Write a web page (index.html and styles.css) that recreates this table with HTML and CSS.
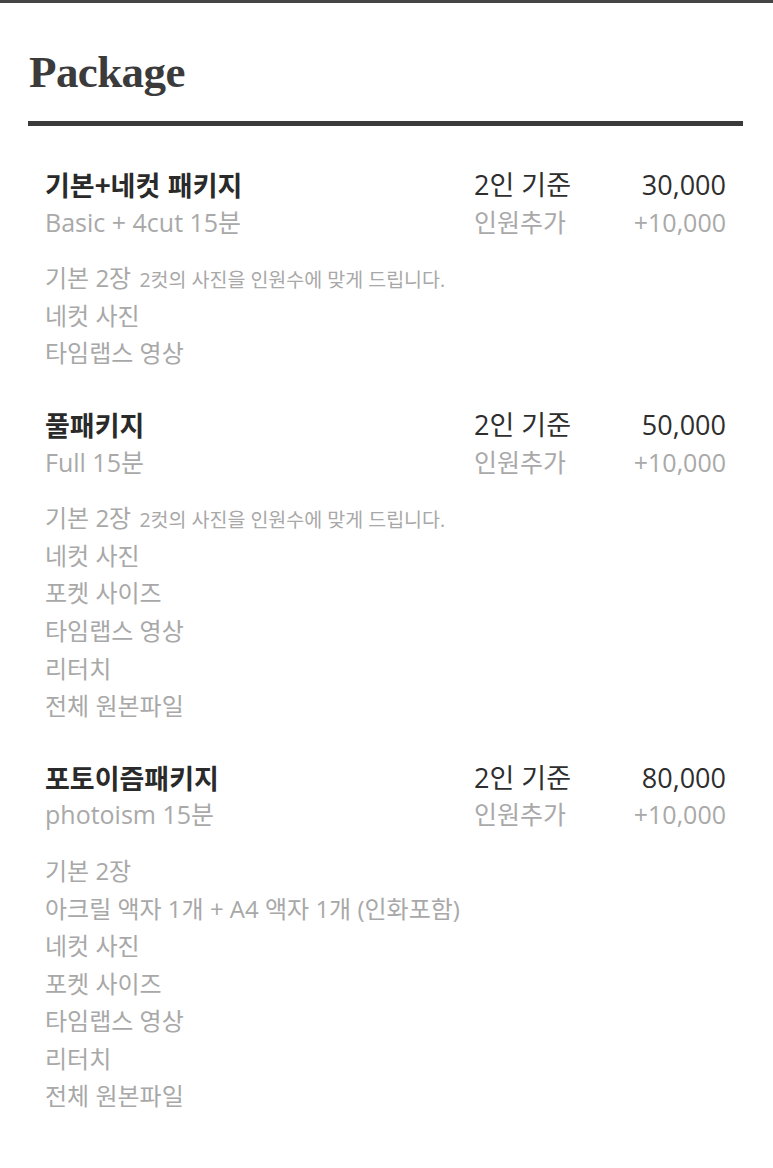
FILE: index.html
```html
<!DOCTYPE html>
<html lang="ko">
<head>
<meta charset="utf-8">
<link rel="stylesheet" href="styles.css">
</head>
<body>
<div class="topbar"></div>
<main class="page">
  <h1 class="heading">Package</h1>
  <div class="rule"></div>

  <section class="pkg">
    <div class="row">
      <div class="name">기본+네컷 패키지</div>
      <div class="base">2인 기준</div>
      <div class="price">30,000</div>
    </div>
    <div class="row sub">
      <div class="name">Basic + 4cut 15분</div>
      <div class="base">인원추가</div>
      <div class="price">+10,000</div>
    </div>
    <ul class="details">
      <li>기본 2장 <span class="note">2컷의 사진을 인원수에 맞게 드립니다.</span></li>
      <li>네컷 사진</li>
      <li>타임랩스 영상</li>
    </ul>
  </section>

  <section class="pkg">
    <div class="row">
      <div class="name">풀패키지</div>
      <div class="base">2인 기준</div>
      <div class="price">50,000</div>
    </div>
    <div class="row sub">
      <div class="name">Full 15분</div>
      <div class="base">인원추가</div>
      <div class="price">+10,000</div>
    </div>
    <ul class="details">
      <li>기본 2장 <span class="note">2컷의 사진을 인원수에 맞게 드립니다.</span></li>
      <li>네컷 사진</li>
      <li>포켓 사이즈</li>
      <li>타임랩스 영상</li>
      <li>리터치</li>
      <li>전체 원본파일</li>
    </ul>
  </section>

  <section class="pkg">
    <div class="row">
      <div class="name">포토이즘패키지</div>
      <div class="base">2인 기준</div>
      <div class="price">80,000</div>
    </div>
    <div class="row sub">
      <div class="name">photoism 15분</div>
      <div class="base">인원추가</div>
      <div class="price">+10,000</div>
    </div>
    <ul class="details">
      <li>기본 2장</li>
      <li>아크릴 액자 1개 + A4 액자 1개 (인화포함)</li>
      <li>네컷 사진</li>
      <li>포켓 사이즈</li>
      <li>타임랩스 영상</li>
      <li>리터치</li>
      <li>전체 원본파일</li>
    </ul>
  </section>
</main>
</body>
</html>
```
FILE: styles.css
```css
html, body {
  margin: 0;
  padding: 0;
  background: #ffffff;
}

body {
  font-family: "Open Sans", "Noto Sans CJK KR", sans-serif;
  color: #2b2b2b;
}

.topbar {
  height: 3px;
  background: #454545;
}

.page {
  width: 715px;
  margin-left: 28px;
  padding-top: 42px;
}

.heading {
  margin: 0;
  padding-left: 1px;
  font-family: "Liberation Serif", serif;
  font-weight: bold;
  font-size: 45px;
  line-height: 54px;
  letter-spacing: -0.6px;
  color: #3b3b3b;
}

.rule {
  height: 5px;
  background: #3a3a3a;
  margin-top: 22px;
  margin-bottom: 40px;
}

.pkg {
  padding: 0 17px;
  margin-bottom: 34px;
}

.row {
  display: grid;
  grid-template-columns: 429px 1fr auto;
  height: 37.6px;
  line-height: 37.6px;
  font-size: 27px;
}

.row .name {
  font-family: "Noto Sans CJK KR", sans-serif;
  font-weight: bold;
  color: #2a2a2a;
}

.row .base,
.row .price {
  font-family: "Open Sans", "Noto Sans CJK KR", sans-serif;
  color: #2e2e2e;
}

.row .price {
  text-align: right;
}

.row.sub {
  font-size: 25px;
}

.row.sub .name,
.row.sub .base,
.row.sub .price {
  font-family: "Open Sans", "Noto Sans CJK KR", sans-serif;
  font-weight: normal;
  color: #a9a9a9;
}

.details {
  list-style: none;
  margin: 18px 0 0 0;
  padding: 0;
  font-size: 24px;
  color: #a8a8a8;
}

.details li {
  height: 37.6px;
  line-height: 37.6px;
}

.details .note {
  font-size: 19.5px;
  line-height: 1;
  margin-left: 2px;
}
```
